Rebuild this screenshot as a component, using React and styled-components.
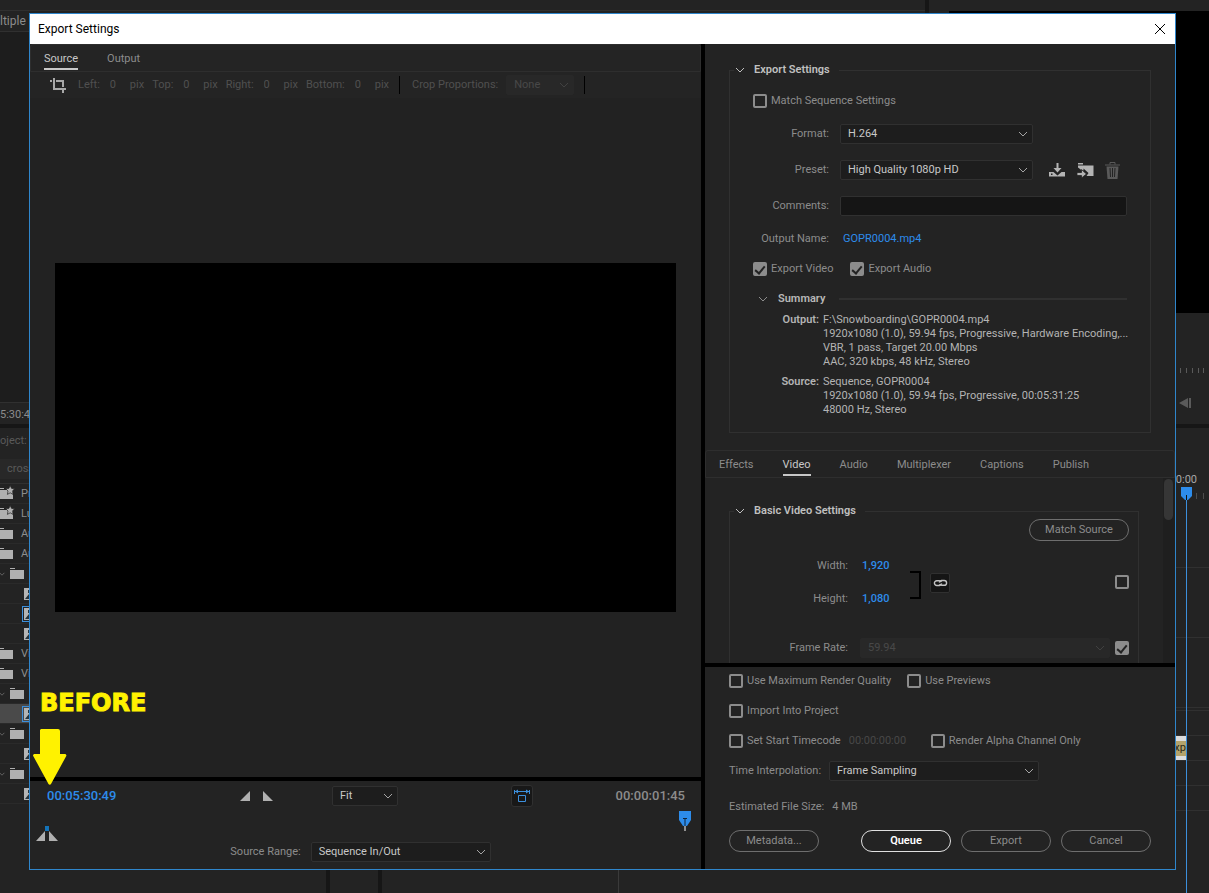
import React, { useState } from 'react'
import styled, { createGlobalStyle, css } from 'styled-components'

const projectItems = [
  { id: 1, kind: 'starred', name: 'Premiere' },
  { id: 2, kind: 'starred', name: 'Lumetri' },
  { id: 3, kind: 'preset', name: 'Audio' },
  { id: 4, kind: 'preset', name: 'Audio' },
  { id: 5, kind: 'bin' },
  { id: 6, kind: 'clip' },
  { id: 7, kind: 'clip', outlined: true },
  { id: 8, kind: 'clip' },
  { id: 9, kind: 'preset', name: 'Video' },
  { id: 10, kind: 'preset', name: 'Video' },
  { id: 11, kind: 'bin' },
  { id: 12, kind: 'clip', outlined: true, selected: true },
  { id: 13, kind: 'bin' },
  { id: 14, kind: 'clip' },
  { id: 15, kind: 'bin' },
  { id: 16, kind: 'clip' },
]

const settingTabs = ['Effects', 'Video', 'Audio', 'Multiplexer', 'Captions', 'Publish']

const Chevron = ({ size = 10 }) => (
  <svg width={size} height={size} viewBox='0 0 10 10' fill='none' stroke='currentColor' aria-hidden='true'>
    <path d='M1 3l4 4 4-4' />
  </svg>
)

const CropIcon = () => (
  <svg width='17' height='17' viewBox='0 0 17 17' fill='none' stroke='#a8a8a8' strokeWidth='2' aria-hidden='true'>
    <path d='M4 1v11h12M0 4h2M6 4h7v6M13 13v3' />
  </svg>
)

const SavePresetIcon = () => (
  <svg width='17' height='16' viewBox='0 0 17 16' fill='#b4b4b4' aria-hidden='true'>
    <path d='M7.500 1h2v5h3L8.500 10.500 4.500 6h3z' />
    <path d='M0 10h4.500l4 3.500 4-3.500H16v4.500H0zM2 11.500V13h1.500v-1.500z' fillRule='evenodd' />
  </svg>
)

const ImportPresetIcon = () => (
  <svg width='17' height='16' viewBox='0 0 17 16' aria-hidden='true'>
    <path d='M1 1h5v1.500H1zM1 3.500h15.500V14H9.500l2-3L6.500 6.500v2H5L1 5.500z' fill='#b4b4b4' />
    <path d='M0 10.500h4.500V7.500L9.500 12l-5 4v-2.500H0z' fill='#b4b4b4' stroke='#232323' strokeWidth='.8' />
  </svg>
)

const TrashIcon = () => (
  <svg width='15' height='17' viewBox='0 0 15 17' aria-hidden='true'>
    <path d='M5 2.500V.5h5v2M0 3h15' fill='none' stroke='#5a5a5a' />
    <path d='M1.500 4.500h12L12.500 17h-10z' fill='#5a5a5a' />
    <path d='M5 6l.5 9M7.500 6v9M10 6l-.5 9' stroke='#232323' />
  </svg>
)

const LinkIcon = () => (
  <svg width='15' height='8' viewBox='0 0 15 8' fill='none' stroke='#c4c4c4' strokeWidth='1.400' aria-hidden='true'>
    <path d='M8.700 4.600a3 3 0 0 1-2.200 1.900H3.800a2.400 2.400 0 0 1 0-4.800h2.400c1.100 0 1.800.5 2.200 1.300' />
    <path d='M6.300 3.400a3 3 0 0 1 2.200-1.900h2.700a2.400 2.400 0 0 1 0 4.800H8.800c-1.100 0-1.800-.5-2.200-1.300' />
  </svg>
)

const AspectIcon = () => (
  <svg width='16' height='14' viewBox='0 0 16 14' fill='none' stroke='#3c8fdc' aria-hidden='true'>
    <path d='M.5 1v4M15.500 1v4M1 2.500h14M4.500 6.500h7v6h-7z' />
    <path d='M1 2.500L4 .5v4zM15 2.500L12 .5v4z' fill='#3c8fdc' stroke='none' />
  </svg>
)

const FolderIcon = ({ starred }) => (
  <svg width='15' height='14' viewBox='0 0 15 14' fill='#b0b0b0' aria-hidden='true'>
    <path d='M0 1h5v1H0zM0 3h14v9H0z' />
    {starred && (
      <path
        d='M11.200-1.500l1.400 2.900 3 .4-2.200 2.200.6 3.400-2.800-1.600-2.800 1.600.6-3.400-2.200-2.200 3-.4z'
        stroke='#222'
        strokeWidth='.7'
      />
    )}
  </svg>
)

const ClipIcon = () => (
  <svg width='12' height='12' viewBox='0 0 12 12' aria-hidden='true'>
    <path d='M0 0h12v12H0z' fill='#b4b4b4' />
    <path d='M1 11l4-5v5zM4 2h2v3H4z' fill='#26323a' />
  </svg>
)

const App = () => {
  const [activeTab, setActiveTab] = useState('Video')
  const [preview, setPreview] = useState('Source')

  return (
    <>
      <GlobalStyle />
      <Workspace>
        <Monitors>
          <SourceMonitor>
            <TopStrip />
            <MonitorTab>ltiple</MonitorTab>
            <MonitorScreen />
            <MonitorTime>5:30:49</MonitorTime>
          </SourceMonitor>
          <ProgramMonitor>
            <ProgramScreen />
            <Transport>
              <svg width='30' height='6' viewBox='0 0 30 6' stroke='#5a5a5a' aria-hidden='true'>
                <path d='M1.500 0v5M7.500 0v5M13.500 0v5M19.500 0v5M24.500 0v5' />
              </svg>
              <svg width='30' height='10' viewBox='0 0 30 10' fill='#5a5a5a' aria-hidden='true'>
                <path d='M0 5l9-5v10zM10 0h2v10h-2z' />
              </svg>
            </Transport>
          </ProgramMonitor>
        </Monitors>

        <Panels>
          <ProjectPanel>
            <ProjectTab>oject: P</ProjectTab>
            <SearchRow>cross</SearchRow>
            <ItemList>
              {projectItems.map((item) => (
                <Item key={item.id} $kind={item.kind} $selected={item.selected}>
                  {item.kind === 'bin' && <Chevron size={6} />}
                  {item.kind === 'clip' ? (
                    <ClipFrame $outlined={item.outlined}><ClipIcon /></ClipFrame>
                  ) : (
                    <FolderIcon starred={item.kind === 'starred'} />
                  )}
                  {item.name && <span>{item.name}</span>}
                </Item>
              ))}
            </ItemList>
          </ProjectPanel>
          <ToolPanel />
          <TimelinePanel>
            <TrackHeads />
            <TrackArea>
              <Ruler>0:00</Ruler>
              <Ticks>
                <svg width='30' height='8' viewBox='0 0 30 8' stroke='#4c4c4c' aria-hidden='true'>
                  <path d='M17.500 1v6M24.500 1v6' />
                </svg>
              </Ticks>
              <Track $size='tall' />
              <Track $size='mid' />
              <Track $size='mid' />
              <Track $size='thin' />
              <Track />
              <Track><TrackClip>xp</TrackClip></Track>
              <Track />
              <Track />
              <Playhead>
                <svg width='11' height='13' viewBox='0 0 11 13' aria-hidden='true'>
                  <path d='M0 0h11v9l-4 4H4L0 9z' fill='#2d8ceb' />
                  <path d='M5.500 8v5' stroke='#111' />
                </svg>
              </Playhead>
            </TrackArea>
          </TimelinePanel>
        </Panels>

        <Dialog role='dialog' aria-label='Export Settings'>
          <TitleBar>
            <h1>Export Settings</h1>
            <CloseButton aria-label='Close'>
              <svg width='10' height='10' viewBox='0 0 10 10' stroke='#000' aria-hidden='true'>
                <path d='M0 0l10 10M10 0L0 10' />
              </svg>
            </CloseButton>
          </TitleBar>

          <DialogBody>
            <PreviewPane>
              <PreviewTabs>
                {['Source', 'Output'].map((name) => (
                  <Tab key={name} $active={preview === name} onClick={() => setPreview(name)}>
                    {name}
                  </Tab>
                ))}
              </PreviewTabs>
              <CropBar>
                <CropIcon />
                {['Left', 'Top', 'Right', 'Bottom'].map((side) => (
                  <CropField key={side}>
                    {side}:
                    <input defaultValue='0' disabled />
                    pix
                  </CropField>
                ))}
                <Separator />
                <label htmlFor='proportions'>Crop Proportions:</label>
                <SelectBox $width='68px' $dim>
                  <select id='proportions' disabled>
                    <option>None</option>
                  </select>
                  <Chevron />
                </SelectBox>
                <Separator />
              </CropBar>

              <Stage>
                <Frame />
              </Stage>

              <Playback>
                <PlaybackRow>
                  <Timecode aria-label='Current time' defaultValue='00:05:30:49' />
                  <PointButtons>
                    <button aria-label='Set in point'>
                      <svg width='10' height='10' viewBox='0 0 10 10' fill='#b0b0b0'><path d='M10 0v10H0z' /></svg>
                    </button>
                    <button aria-label='Set out point'>
                      <svg width='10' height='10' viewBox='0 0 10 10' fill='#b0b0b0'><path d='M0 0v10h10z' /></svg>
                    </button>
                  </PointButtons>
                  <SelectBox $width='66px'>
                    <select aria-label='Zoom level'>
                      <option>Fit</option>
                    </select>
                    <Chevron />
                  </SelectBox>
                  <AspectButton aria-label='Aspect ratio correction'><AspectIcon /></AspectButton>
                  <Duration>00:00:01:45</Duration>
                </PlaybackRow>
                <Scrubber>
                  <svg width='22' height='16' viewBox='0 0 22 16' aria-hidden='true'>
                    <path d='M9 1h4v5H9z' fill='#1473b8' />
                    <path d='M0 16L9 6v10zM13 6v10h9z' fill='#b0b0b0' />
                  </svg>
                  <svg width='12' height='21' viewBox='0 0 12 21' aria-hidden='true'>
                    <path d='M0 0h12v9l-4 6H4L0 9z' fill='#2d8ceb' />
                    <path d='M4 7.500h4M6 8v7' stroke='#10253a' />
                    <path d='M6 15v5' stroke='#fff' />
                  </svg>
                </Scrubber>
                <RangeRow>
                  <label htmlFor='range'>Source Range:</label>
                  <SelectBox $width='180px'>
                    <select id='range'>
                      <option>Sequence In/Out</option>
                    </select>
                    <Chevron />
                  </SelectBox>
                </RangeRow>
              </Playback>
            </PreviewPane>

            <SettingsPane>
              <ExportSection>
                <Group>
                  <legend><Chevron />Export Settings</legend>
                  <Row>
                    <Check><input type='checkbox' />Match Sequence Settings</Check>
                  </Row>
                  <Row $tall>
                    <RowLabel htmlFor='format'>Format:</RowLabel>
                    <SelectBox $width='193px'>
                      <select id='format'>
                        <option>H.264</option>
                      </select>
                      <Chevron />
                    </SelectBox>
                  </Row>
                  <Row $tall>
                    <RowLabel htmlFor='preset'>Preset:</RowLabel>
                    <SelectBox $width='193px'>
                      <select id='preset'>
                        <option>High Quality 1080p HD</option>
                      </select>
                      <Chevron />
                    </SelectBox>
                    <PresetTools>
                      <button aria-label='Save preset'><SavePresetIcon /></button>
                      <button aria-label='Import preset'><ImportPresetIcon /></button>
                      <button aria-label='Delete preset' disabled><TrashIcon /></button>
                    </PresetTools>
                  </Row>
                  <Row $tall>
                    <RowLabel htmlFor='comments'>Comments:</RowLabel>
                    <TextInput id='comments' />
                  </Row>
                  <Row>
                    <RowLabel as='span'>Output Name:</RowLabel>
                    <OutputLink href='#output'>GOPR0004.mp4</OutputLink>
                  </Row>
                  <Row $spread>
                    <Check><input type='checkbox' defaultChecked />Export Video</Check>
                    <Check><input type='checkbox' defaultChecked />Export Audio</Check>
                  </Row>
                  <SummaryHead>
                    <Chevron />
                    <h2>Summary</h2>
                    <hr />
                  </SummaryHead>
                  <SummaryList>
                    <dt>Output:</dt>
                    <dd>
                      <div>F:\Snowboarding\GOPR0004.mp4</div>
                      <div>1920x1080 (1.0), 59.94 fps, Progressive, Hardware Encoding,...</div>
                      <div>VBR, 1 pass, Target 20.00 Mbps</div>
                      <div>AAC, 320 kbps, 48 kHz, Stereo</div>
                    </dd>
                    <dt>Source:</dt>
                    <dd>
                      <div>Sequence, GOPR0004</div>
                      <div>1920x1080 (1.0), 59.94 fps, Progressive, 00:05:31:25</div>
                      <div>48000 Hz, Stereo</div>
                    </dd>
                  </SummaryList>
                </Group>
              </ExportSection>

              <SettingTabs>
                {settingTabs.map((name) => (
                  <Tab key={name} $active={activeTab === name} onClick={() => setActiveTab(name)}>
                    {name}
                  </Tab>
                ))}
              </SettingTabs>

              <VideoSection>
                <Group>
                  <legend><Chevron />Basic Video Settings</legend>
                  <MatchRow>
                    <PillButton $wide>Match Source</PillButton>
                  </MatchRow>
                  <SizeRow>
                    <SizeFields>
                      <label htmlFor='width'>Width:</label>
                      <input id='width' defaultValue='1,920' />
                      <label htmlFor='height'>Height:</label>
                      <input id='height' defaultValue='1,080' />
                    </SizeFields>
                    <Bracket />
                    <LinkButton aria-label='Link width and height'><LinkIcon /></LinkButton>
                    <Check><input type='checkbox' aria-label='Match size' /></Check>
                  </SizeRow>
                  <RateRow>
                    <label htmlFor='rate'>Frame Rate:</label>
                    <SelectBox $dim>
                      <select id='rate' disabled>
                        <option>59.94</option>
                      </select>
                      <Chevron />
                    </SelectBox>
                    <Check><input type='checkbox' defaultChecked aria-label='Match frame rate' /></Check>
                  </RateRow>
                </Group>
                <ScrollTrack><ScrollThumb /></ScrollTrack>
              </VideoSection>

              <Footer>
                <FooterRow>
                  <Check><input type='checkbox' />Use Maximum Render Quality</Check>
                  <Check><input type='checkbox' />Use Previews</Check>
                </FooterRow>
                <FooterRow $size='mid'>
                  <Check><input type='checkbox' />Import Into Project</Check>
                </FooterRow>
                <FooterRow>
                  <Check><input type='checkbox' />Set Start Timecode</Check>
                  <StartTime aria-label='Start timecode' defaultValue='00:00:00:00' disabled />
                  <Check><input type='checkbox' />Render Alpha Channel Only</Check>
                </FooterRow>
                <FooterRow $size='mid'>
                  <label htmlFor='interpolation'>Time Interpolation:</label>
                  <SelectBox $width='210px'>
                    <select id='interpolation'>
                      <option>Frame Sampling</option>
                    </select>
                    <Chevron />
                  </SelectBox>
                </FooterRow>
                <FooterRow $size='tall'>
                  <span>Estimated File Size:</span>
                  <span>4 MB</span>
                </FooterRow>
                <Actions>
                  <PillButton>Metadata...</PillButton>
                  <PillButton $primary>Queue</PillButton>
                  <PillButton>Export</PillButton>
                  <PillButton>Cancel</PillButton>
                </Actions>
              </Footer>
            </SettingsPane>
          </DialogBody>

          <Callout>
            <strong>BEFORE</strong>
            <svg width='34' height='56' viewBox='0 0 34 56' fill='#fff200' aria-hidden='true'>
              <path d='M8 0h17a2 2 0 0 1 2 2v23h5a1.500 1.500 0 0 1 1 2.500L18 55a1.500 1.500 0 0 1-2.500 0L.5 27.500A1.500 1.500 0 0 1 2 25h5V1z' />
            </svg>
          </Callout>
        </Dialog>
      </Workspace>
    </>
  )
}

const GlobalStyle = createGlobalStyle`
  * {
    box-sizing: border-box;
  }

  body {
    margin: 0;
    background: #222;
    color: #8c8c8c;
    font-family: Roboto, 'Noto Sans', sans-serif;
    font-size: 11px;
    line-height: 14px;
  }

  button, input, select {
    margin: 0;
    padding: 0;
    border: 0;
    background: none;
    color: inherit;
    font: inherit;
    opacity: 1;
  }

  h1, h2, dl, dd {
    margin: 0;
    font-size: inherit;
  }

  svg {
    display: block;
    flex: none;
  }
`

const Workspace = styled.main`
  position: relative;
  display: flex;
  flex-direction: column;
  gap: 4px;
  height: 100vh;
  overflow: hidden;
  background: #161616;
  white-space: nowrap;
`

const Monitors = styled.div`
  display: flex;
  flex: 0 0 424px;
  gap: 4px;
`

const SourceMonitor = styled.section`
  flex: 1;
  display: flex;
  flex-direction: column;
  background: #232323;
`

const TopStrip = styled.div`
  height: 11px;
  border-bottom: 1px solid #303030;
`

const MonitorTab = styled.div`
  display: flex;
  align-items: center;
  height: 21px;
  border-bottom: 1px solid #303030;
  font-size: 12px;
`

const MonitorScreen = styled.div`
  flex: 1;
  background: #1d1d1d;
`

const MonitorTime = styled.div`
  padding-top: 5px;
  height: 22px;
  border-top: 1px solid #303030;
`

const ProgramMonitor = styled.section`
  display: flex;
  flex-direction: column;
  width: 280px;
  background: #232323;
`

const ProgramScreen = styled.div`
  height: 302px;
  margin: 11px 0 0 20px;
  background: #000;
`

const Transport = styled.div`
  display: flex;
  flex-direction: column;
  align-items: flex-end;
  gap: 24px;
  padding-top: 55px;
`

const Panels = styled.div`
  flex: 1;
  min-height: 0;
  display: grid;
  grid-template-columns: 326px 48px 1fr;
  gap: 4px;

  > * {
    background: #232323;
  }
`

const ProjectPanel = styled.section`
  padding-right: 5px;
`

const ProjectTab = styled.div`
  padding-top: 6px;
  height: 31px;
  color: #5a5a5a;
`

const SearchRow = styled.div`
  padding: 3px 0 0 7px;
  height: 20px;
  background: #282828;
  color: #5a5a5a;
`

const ItemList = styled.div`
  margin-top: 4px;
  border-top: 1px solid #303030;
`

const Item = styled.div`
  display: flex;
  align-items: center;
  gap: ${({ $kind }) => ($kind === 'bin' ? '6px' : '7px')};
  height: 20px;
  padding-left: ${({ $kind }) => ($kind === 'clip' ? '22px' : '0')};
  border-bottom: 1px solid #2a2a2a;
  background: ${({ $selected }) => ($selected ? '#4a4a4a' : 'none')};

  svg {
    margin-left: -1px;
    overflow: visible;
  }
`

const ClipFrame = styled.span`
  padding: 1px 2px;
  border: 1px solid ${({ $outlined }) => ($outlined ? '#3c8fdc' : 'transparent')};
`

const ToolPanel = styled.section``

const TimelinePanel = styled.section`
  display: flex;
`

const TrackHeads = styled.div`
  width: 237px;
  border-right: 1px solid #3a3a3a;
`

const TrackArea = styled.div`
  position: relative;
  flex: 1;
`

const Ruler = styled.div`
  height: 60px;
  padding: 45px 12px 0 0;
  color: #a8a8a8;
  text-align: right;
`

const Ticks = styled.div`
  display: flex;
  justify-content: flex-end;
  height: 12px;
  padding-top: 4px;
`

const trackHeights = { tall: '68px', mid: '70px', thin: '3px' }

const Track = styled.div`
  display: flex;
  justify-content: flex-end;
  height: ${({ $size }) => trackHeights[$size] || '25px'};
  border-bottom: 1px solid #303030;
`

const TrackClip = styled.div`
  width: 40px;
  margin-right: 23px;
  text-align: right;
  color: #2c2816;
  background: #b3a36b;
  border: solid #dcdcdc;
  border-width: 5px 0 4px;
`

/* sits over every track */
const Playhead = styled.div`
  position: absolute;
  top: 59px;
  right: 17px;
  bottom: 0;
  width: 11px;
  background: linear-gradient(#3c8fdc, #3c8fdc) center / 1px 100% no-repeat;
`

const Dialog = styled.div`
  position: absolute;
  inset: 13px 33px 23px 29px;
  display: flex;
  flex-direction: column;
  border: 1px solid #2f86cc;
  background: #232323;
`

const TitleBar = styled.header`
  display: flex;
  align-items: center;
  justify-content: space-between;
  flex: 0 0 30px;
  padding: 0 10px 0 8px;
  background: #fff;
  color: #000;

  h1 {
    font-size: 12px;
    font-weight: 400;
  }
`

const CloseButton = styled.button`
  cursor: pointer;
`

const DialogBody = styled.div`
  flex: 1;
  min-height: 0;
  display: grid;
  grid-template-columns: minmax(0, 671fr) minmax(0, 470fr);
  gap: 4px;
  background: #000;
`

const PreviewPane = styled.section`
  display: flex;
  flex-direction: column;
  background: #222;
`

const tabBar = css`
  display: flex;
  flex: 0 0 28px;
  gap: 29px;
  padding-left: 13px;
  border: 1px solid #2e2e2e;
  border-radius: 3px 3px 0 0;
`

const PreviewTabs = styled.nav`
  ${tabBar}
  background: #242424;
`

const Tab = styled.button`
  height: 25px;
  padding-top: 4px;
  color: ${({ $active }) => ($active ? '#c8c8c8' : '#8c8c8c')};
  border-bottom: 2px solid ${({ $active }) => ($active ? '#c8c8c8' : 'transparent')};
  cursor: pointer;
`

const CropBar = styled.div`
  display: flex;
  align-items: center;
  flex: 0 0 26px;
  gap: 8px;
  padding-left: 20px;
  background: #242424;
  color: #505050;

  > svg {
    margin-right: 3px;
  }
`

const CropField = styled.label`
  display: flex;

  input {
    width: 30px;
    padding-left: 10px;
  }
`

const Separator = styled.span`
  width: 1px;
  height: 18px;
  margin: 0 4px 0 2px;
  background: #000;
`

const Stage = styled.div`
  flex: 1;
  display: flex;
  align-items: center;
  padding: 0 25px;
`

const Frame = styled.div`
  flex: 1;
  aspect-ratio: 16 / 9;
  background: #000;
`

const SelectBox = styled.div`
  display: grid;
  align-items: center;
  ${({ $width }) => ($width ? `width: ${$width};` : 'flex: 1;')}
  height: 20px;
  border: 1px solid ${({ $dim }) => ($dim ? '#282828' : '#303030')};
  border-radius: 2px;
  background: ${({ $dim }) => ($dim ? '#282828' : '#1d1d1d')};
  color: ${({ $dim }) => ($dim ? '#484848' : '#c8c8c8')};

  select,
  svg {
    grid-area: 1 / 1;
  }

  select {
    appearance: none;
    width: 100%;
    height: 18px;
    padding: 0 20px 0 7px;
    line-height: 18px;
  }

  svg {
    justify-self: end;
    margin-right: 4px;
    pointer-events: none;
    opacity: 0.8;
  }
`

const Playback = styled.div`
  flex: 0 0 92px;
  border-top: 4px solid #000;
  background: #232323;
`

const PlaybackRow = styled.div`
  display: grid;
  grid-template-columns: 194px 92px 66px 1fr 152px;
  align-items: center;
  height: 30px;
  padding: 0 16px;
`

const Timecode = styled.input`
  width: 90px;
  padding-left: 1px;
  color: #2d8ceb;
  font-size: 13px;
  font-weight: 500;
`

const PointButtons = styled.div`
  display: flex;
  gap: 13px;
`

const AspectButton = styled.button`
  display: grid;
  place-items: center;
  justify-self: end;
  width: 22px;
  height: 22px;
  border: 1px solid #303030;
  border-radius: 3px;
  background: #181818;
`

const Duration = styled.span`
  text-align: right;
  font-size: 13px;
  font-weight: 500;
`

const Scrubber = styled.div`
  display: flex;
  justify-content: space-between;
  align-items: flex-end;
  height: 30px;
  padding: 0 10px 0 6px;

  svg:last-child {
    align-self: flex-start;
  }
`

const RangeRow = styled.div`
  display: flex;
  align-items: center;
  justify-content: center;
  gap: 10px;
  height: 22px;
  padding-right: 10px;
`

const SettingsPane = styled.section`
  display: flex;
  flex-direction: column;
  min-height: 0;
  background: #232323;
`

const ExportSection = styled.div`
  padding: 18px 24px 17px;
`

const Group = styled.fieldset`
  min-width: 0;
  margin: 0;
  padding: 8px 23px 15px;
  border: 1px solid #303030;

  legend {
    display: flex;
    align-items: center;
    gap: 9px;
    height: 16px;
    margin-left: -19px;
    padding: 0 9px 0 1px;
    color: #c0c0c0;
    font-weight: 600;
  }
`

const Row = styled.div`
  display: flex;
  align-items: center;
  gap: ${({ $spread }) => ($spread ? '17px' : '11px')};
  height: ${({ $tall }) => ($tall ? '36px' : '30px')};
`

const RowLabel = styled.label`
  width: 76px;
  text-align: right;
`

const Check = styled.label`
  display: flex;
  align-items: center;
  gap: 4px;

  input {
    appearance: none;
    display: grid;
    place-items: center;
    width: 14px;
    height: 14px;
    border: 2px solid #8c8c8c;
    border-radius: 2px;
  }

  input:checked {
    background: #8c8c8c;
  }

  input:checked::after {
    content: '';
    width: 4px;
    height: 8px;
    margin-bottom: 3px;
    border: solid #232323;
    border-width: 0 2px 2px 0;
    transform: rotate(40deg);
  }
`

const PresetTools = styled.div`
  display: flex;
  align-items: center;
  gap: 11px;
  margin-left: 5px;
`

const TextInput = styled.input`
  flex: 1;
  height: 20px;
  border: 1px solid #303030;
  border-radius: 2px;
  background: #151515;
`

const OutputLink = styled.a`
  padding-left: 3px;
  color: #2d8ceb;
  text-decoration: none;
`

const SummaryHead = styled.div`
  display: flex;
  align-items: center;
  gap: 10px;
  height: 29px;
  padding-left: 5px;

  h2 {
    color: #b8b8b8;
    font-weight: 600;
  }

  hr {
    flex: 1;
    margin: 0 0 0 4px;
    border: 0;
    border-top: 2px solid #303030;
  }
`

const SummaryList = styled.dl`
  display: grid;
  grid-template-columns: 66px minmax(0, 1fr);
  gap: 6px 4px;
  color: #b4b4b4;

  dt {
    text-align: right;
    font-weight: 600;
  }
`

const SettingTabs = styled.nav`
  ${tabBar}
`

const VideoSection = styled.div`
  flex: 1;
  min-height: 0;
  display: grid;
  grid-template-columns: minmax(0, 1fr) 12px;
  column-gap: 24px;
  overflow: hidden;

  > fieldset {
    margin: 25px 0 -40px 24px;
    padding: 0 9px;
  }

  > fieldset > legend {
    margin-left: -5px;
  }
`

const MatchRow = styled.div`
  display: flex;
  justify-content: flex-end;
`

const SizeRow = styled.div`
  display: flex;
  align-items: center;
  height: 66px;
  margin-top: 8px;

  > label {
    margin-left: auto;
  }
`

const SizeFields = styled.div`
  display: grid;
  grid-template-columns: 109px 48px;
  grid-auto-rows: 33px;
  align-items: center;
  column-gap: 14px;

  label {
    text-align: right;
  }

  input {
    width: 48px;
    color: #2d8ceb;
    font-weight: 500;
  }
`

const Bracket = styled.span`
  width: 11px;
  height: 28px;
  margin-top: 6px;
  border: 2px solid #000;
  border-left: 0;
`

const LinkButton = styled.button`
  display: grid;
  place-items: center;
  width: 20px;
  height: 20px;
  margin: 2px 0 0 9px;
  border: 1px solid #303030;
  border-radius: 2px;
  background: #151515;
`

const RateRow = styled.div`
  display: flex;
  align-items: center;
  height: 66px;

  > label:first-child {
    width: 109px;
    margin-right: 12px;
    text-align: right;
  }

  > label:last-child {
    margin-left: 5px;
  }
`

const ScrollTrack = styled.div`
  padding: 1px 2px 0 1px;
  background: #1f1f1f;
`

const ScrollThumb = styled.div`
  height: 41px;
  border-radius: 5px;
  background: #363636;
`

const Footer = styled.footer`
  padding: 0 24px 14px;
  border-top: 4px solid #000;
`

const footerHeights = { mid: '32px', tall: '40px' }

const FooterRow = styled.div`
  display: flex;
  align-items: center;
  gap: 8px;
  height: ${({ $size }) => footerHeights[$size] || '28px'};

  > label + label {
    margin-left: 8px;
  }
`

const StartTime = styled.input`
  width: 74px;
  color: #484848;
`

const PillButton = styled.button`
  width: ${({ $wide }) => ($wide ? '100px' : '90px')};
  height: 22px;
  border: 1px solid ${({ $primary }) => ($primary ? '#e0e0e0' : '#6e6e6e')};
  border-radius: 11px;
  color: ${({ $primary }) => ($primary ? '#fff' : '#8c8c8c')};
  font-weight: ${({ $primary }) => ($primary ? 600 : 400)};
  cursor: pointer;
`

const Actions = styled.div`
  display: flex;
  align-items: center;
  gap: 10px;
  height: 28px;

  ${PillButton}:first-child {
    margin-right: auto;
  }
`

/* annotation laid over the preview and the playback bar */
const Callout = styled.div`
  position: absolute;
  left: 3px;
  bottom: 84px;
  display: flex;
  flex-direction: column;
  gap: 12px;
  pointer-events: none;

  strong {
    padding-left: 7px;
    color: #fff200;
    font: bold 24px/28px 'DejaVu Sans', sans-serif;
    -webkit-text-stroke: 1px #fff200;
  }
`

export default App
